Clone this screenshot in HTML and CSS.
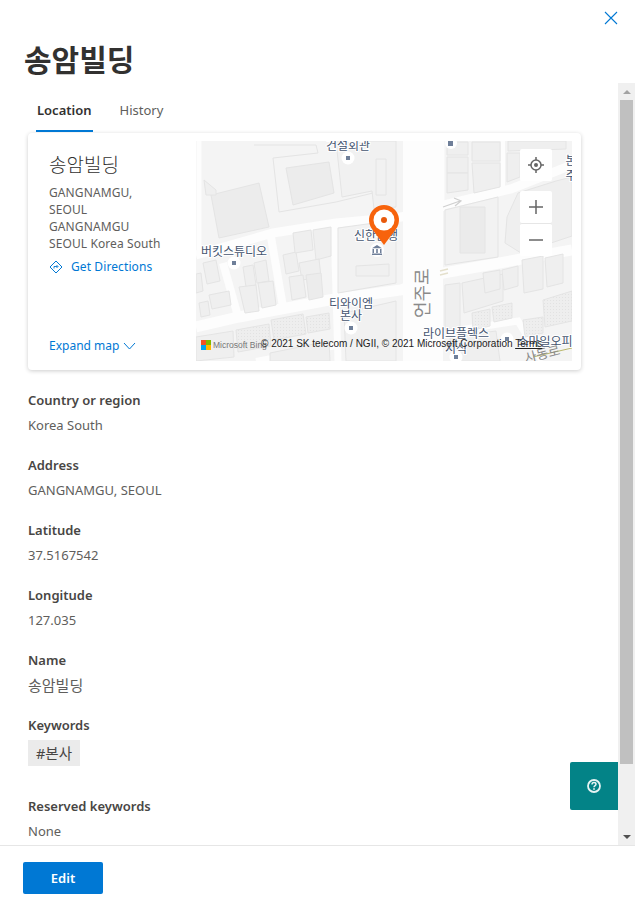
FILE: index.html
```html
<!DOCTYPE html>
<html lang="ko">
<head>
    <meta charset="UTF-8">
    <meta name="viewport" content="width=device-width, initial-scale=1.0">
    <title>송암빌딩</title>
    <link rel="stylesheet" href="styles.css">
</head>
<body>
    <div class="panel">
        <div class="panel-header">
            <div class="close-row">
                <button class="close-btn" aria-label="Close">
                    <svg width="14" height="14" viewBox="0 0 14 14"><path d="M1 1L13 13M13 1L1 13" stroke="#0078d4" stroke-width="1.1" fill="none"/></svg>
                </button>
            </div>
            <h1 class="panel-title">송암빌딩</h1>
        </div>

        <div class="panel-middle">
            <div class="content">
                <div class="tabs">
                    <div class="tab tab-active">Location</div>
                    <div class="tab">History</div>
                </div>

                <div class="map-card">
                    <div class="map-info">
                        <div>
                            <div class="place-name">송암빌딩</div>
                            <div class="place-address">GANGNAMGU,<br>SEOUL<br>GANGNAMGU<br>SEOUL Korea South</div>
                            <div class="directions">
                                <svg width="14" height="14" viewBox="0 0 14 14"><path d="M7 1L13 7L7 13L1 7Z" stroke="#0078d4" fill="none"/><path d="M5 8.5V6.5H8.5M7.5 5L9 6.5L7.5 8" stroke="#0078d4" stroke-width="0.9" fill="none"/></svg>
                                <span>Get Directions</span>
                            </div>
                        </div>
                        <div class="expand-map">
                            <span>Expand map</span>
                            <svg width="13" height="8" viewBox="0 0 13 8"><path d="M1 1L6.5 7L12 1" stroke="#0078d4" fill="none"/></svg>
                        </div>
                    </div>

                    <div class="map">
                        <svg class="map-art" width="376" height="220" viewBox="0 0 376 220">
                            <defs>
                                <pattern id="dots" width="3" height="3" patternUnits="userSpaceOnUse">
                                    <rect width="3" height="3" fill="#eeeeee"/>
                                    <rect width="1" height="1" fill="#e2e2e2"/>
                                </pattern>
                            </defs>
                            <rect width="376" height="220" fill="#f4f4f4"/>
                            <!-- roads -->
                            <g fill="none" stroke="#fdfdfd">
                                <path d="M0 114L77 92L140 82L205 76L247 64L315 48L376 24" stroke-width="9"/>
                                <path d="M0 186L43 176L133 159L205 149L247 132L376 109" stroke-width="11"/>
                                <path d="M227 0V220" stroke-width="40"/>
                                <path d="M27 122L43 179" stroke-width="8"/>
                                <path d="M75 96L87 166" stroke-width="8"/>
                                <path d="M138 82L142 220" stroke-width="7"/>
                                <path d="M3 0V112" stroke-width="5"/>
                                <path d="M60 220L140 205" stroke-width="6"/>
                                <path d="M250 191L322 180L346 220" stroke-width="7"/>
                                <path d="M307 0V52" stroke-width="4"/>
                                <path d="M246 0V70" stroke-width="5"/>
                            </g>
                            <!-- buildings -->
                            <g fill="#efefef" stroke="#e4e4e4">
                                <path d="M15 54L63 42L73 86L23 97Z" fill="#ececec"/>
                                <path d="M8 39L20 49V54L10 54Z"/>
                                <path d="M90 27L133 21L138 52L97 64Z" fill="#ececec"/>
                                <path d="M58 4H120L122 12L77 17L83 71L140 61L177 52" fill="none"/>
                                <path d="M140 0H200V66L178 68L176 50L146 56Z" fill="#f1f1f1"/>
                                <path d="M180 18H190V54H180Z" fill="none"/>
                                <path d="M87 114L100 111L103 130L90 133Z"/>
                                <path d="M97 92L115 89L117 109L99 112Z"/>
                                <path d="M117 89L135 86V115L120 119Z"/>
                                <path d="M103 122L123 118L125 136L106 139Z"/>
                                <path d="M93 136L107 134L110 156L96 159Z"/>
                                <path d="M110 134L125 132L127 156L113 159Z" fill="#ececec"/>
                                <path d="M47 126L57 124L60 144L50 146Z"/>
                                <path d="M58 122L70 119L73 140L61 142Z"/>
                                <path d="M43 146L60 144L63 170L49 172Z"/>
                                <path d="M62 142L77 140L80 164L66 167Z"/>
                                <path d="M7 122L20 119L24 140L11 143Z"/>
                                <path d="M0 133L5 132L7 150L0 152Z"/>
                                <path d="M3 162L12 160L14 174L5 176Z"/>
                                <path d="M13 154L33 150L35 164L16 168Z"/>
                                <path d="M142 87L200 79V142L142 152Z" fill="#f2f2f2"/>
                                <path d="M160 125L193 123V135H160Z" fill="#f0f0f0"/>
                                <path d="M148 172L200 160V220H150Z" fill="#f1f1f1"/>
                                <path d="M40 189L73 183L75 205L42 211Z" fill="url(#dots)"/>
                                <path d="M75 179L107 173L110 193L78 199Z" fill="url(#dots)"/>
                                <path d="M110 176L133 172L134 188L112 192Z" fill="url(#dots)"/>
                                <path d="M0 196L37 190L38 216L0 220Z"/>
                                <path d="M74 212L133 200L134 220H74Z"/>
                                <path d="M251 16H272V32H251Z"/>
                                <path d="M251 32H272V49L251 52Z"/>
                                <path d="M251 1H272V14H251Z"/>
                                <path d="M276 1H304V20H276Z"/>
                                <path d="M276 22H304V46L278 52Z"/>
                                <path d="M312 0H370V8L312 10Z"/>
                                <path d="M311 12H324V36L311 41Z"/>
                                <path d="M249 69L302 56V116L249 124Z" fill="#f2f2f2"/>
                                <path d="M264 66H289V112H264Z" fill="#ebebeb"/>
                                <path d="M309 102L311 76L322 52L360 40L376 36V95L325 112Z"/>
                                <path d="M330 60L350 54L352 88L332 94Z"/>
                                <path d="M249 144L264 142V189H249Z"/>
                                <path d="M266 142L307 133V160L268 172Z"/>
                                <path d="M287 132L304 129V148L289 152Z"/>
                                <path d="M306 129L322 125V145L308 149Z"/>
                                <path d="M326 119L347 115V148L328 152Z"/>
                                <path d="M349 117L367 113V142L351 146Z"/>
                                <path d="M347 159L376 150V180L349 186Z" fill="url(#dots)"/>
                                <path d="M327 179L347 176V192L329 196Z" fill="url(#dots)"/>
                                <path d="M276 172L294 168V185L277 189Z" fill="url(#dots)"/>
                                <path d="M296 166L316 162V177L298 181Z" fill="url(#dots)"/>
                                <path d="M254 196L300 190L304 220H256Z"/>
                            </g>
                            <path d="M247 66L264 60M258 57L265 60L259 65" fill="none" stroke="#cfcfcf" stroke-width="1.2"/>
                            <path d="M244 130L252 128M244 134L252 132" stroke="#e4e0cc" stroke-width="1.5"/>
                            <path d="M337 216L376 207" stroke="#b9b66a" stroke-width="1"/>
                            <!-- place dots -->
                            <g fill="#fff">
                                <circle cx="152" cy="17" r="6.5"/>
                                <circle cx="38" cy="122" r="6.5"/>
                                <circle cx="155" cy="187" r="6.5"/>
                                <circle cx="260" cy="216" r="6.5"/>
                                <circle cx="311" cy="198" r="6.5"/>
                                <circle cx="181" cy="109" r="7"/>
                                <circle cx="255" cy="2" r="6"/>
                            </g>
                            <g fill="#6f7f99">
                                <rect x="150" y="15" width="4" height="4"/>
                                <rect x="36" y="120" width="4" height="4"/>
                                <rect x="153" y="185" width="4" height="4"/>
                                <rect x="258" y="214" width="4" height="4"/>
                                <rect x="309" y="196" width="4" height="4"/>
                                <rect x="252" y="0" width="5" height="5"/>
                                <path d="M176 114H186V112.5H176ZM176.5 108H178V112H176.500ZM180.200 108H181.800V112H180.200ZM184 108H185.500V112H184ZM176 107.200L181 104L186 107.200Z"/>
                            </g>
                            <!-- labels -->
                            <g class="map-label">
                                <text x="152" y="9" text-anchor="middle">건설회관</text>
                                <text x="38" y="115" text-anchor="middle">버킷스튜디오</text>
                                <text x="180" y="99" text-anchor="middle">신한은행</text>
                                <text x="155" y="167" text-anchor="middle">티와이엠</text>
                                <text x="155" y="179" text-anchor="middle">본사</text>
                                <text x="260" y="197" text-anchor="middle">라이브플렉스</text>
                                <text x="260" y="212" text-anchor="middle">지식</text>
                                <text x="349" y="205" text-anchor="middle">스마일오피</text>
                                <text x="375" y="24" text-anchor="middle">본</text>
                                <text x="375" y="39" text-anchor="middle">주</text>
                            </g>
                            <text class="road-label" transform="translate(233,177) rotate(-90)">언주로</text>
                            <text class="road-label road-label-small" transform="translate(330,222) rotate(-14)">사동로</text>
                            <!-- pin -->
                            <path d="M188 104L176 88A15 15 0 1 1 200 88Z" fill="#f7630c"/>
                            <circle cx="188" cy="79" r="10.5" fill="#fff"/>
                            <circle cx="188" cy="79" r="3" fill="#e8590c"/>
                            <!-- bing logo -->
                            <rect x="5" y="199" width="5" height="5" fill="#f25022"/>
                            <rect x="10" y="199" width="5" height="5" fill="#7fba00"/>
                            <rect x="5" y="204" width="5" height="5" fill="#00a4ef"/>
                            <rect x="10" y="204" width="5" height="5" fill="#ffb900"/>
                        </svg>

                        <span class="bing-name">Microsoft Bing</span>
                        <div class="attribution">© 2021 SK telecom / NGII, © 2021 Microsoft Corporation <u>Terms</u></div>

                        <div class="map-controls">
                            <div class="map-btn">
                                <svg width="18" height="18" viewBox="0 0 18 18"><circle cx="9" cy="9" r="5" stroke="#666" stroke-width="1.5" fill="none"/><circle cx="9" cy="9" r="2" fill="#666"/><path d="M9 1V4M9 14V17M1 9H4M14 9H17" stroke="#666" stroke-width="1.5"/></svg>
                            </div>
                            <div class="zoom-group">
                                <div class="map-btn">
                                    <svg width="16" height="16" viewBox="0 0 16 16"><path d="M8 1V15M1 8H15" stroke="#666" stroke-width="1.5"/></svg>
                                </div>
                                <div class="map-btn">
                                    <svg width="16" height="16" viewBox="0 0 16 16"><path d="M1 8H15" stroke="#666" stroke-width="1.5"/></svg>
                                </div>
                            </div>
                        </div>
                    </div>
                </div>

                <div class="field">
                    <div class="field-label">Country or region</div>
                    <div class="field-value">Korea South</div>
                </div>
                <div class="field">
                    <div class="field-label">Address</div>
                    <div class="field-value">GANGNAMGU, SEOUL</div>
                </div>
                <div class="field">
                    <div class="field-label">Latitude</div>
                    <div class="field-value">37.5167542</div>
                </div>
                <div class="field">
                    <div class="field-label">Longitude</div>
                    <div class="field-value">127.035</div>
                </div>
                <div class="field">
                    <div class="field-label">Name</div>
                    <div class="field-value field-value-ko">송암빌딩</div>
                </div>
                <div class="field field-keywords">
                    <div class="field-label">Keywords</div>
                    <span class="tag">#본사</span>
                </div>
                <div class="field">
                    <div class="field-label">Reserved keywords</div>
                    <div class="field-value">None</div>
                </div>
            </div>

            <div class="scrollbar">
                <div class="scroll-arrow"><div class="arrow-up"></div></div>
                <div class="scroll-track"><div class="scroll-thumb"></div></div>
                <div class="scroll-arrow"><div class="arrow-down"></div></div>
            </div>

            <button class="help-btn" aria-label="Help">
                <svg width="16" height="16" viewBox="0 0 16 16"><circle cx="8" cy="8" r="6" stroke="#e6f3f3" stroke-width="1.8" fill="none"/><path d="M6 6.4C6 5.2 6.9 4.6 8 4.6C9.1 4.6 10 5.2 10 6.3C10 7.6 8 7.600 8 9.2" stroke="#e6f3f3" stroke-width="1.5" fill="none"/><rect x="7.2" y="10.2" width="1.6" height="1.6" fill="#e6f3f3"/></svg>
            </button>
        </div>

        <div class="panel-footer">
            <button class="edit-btn">Edit</button>
        </div>
    </div>
</body>
</html>
```

FILE: styles.css
```css
body {
    font-family: "Noto Sans", "Noto Sans CJK KR", sans-serif;
    background-color: white;
    color: #323130;
    margin: 0;
}
.panel {
    display: flex;
    flex-direction: column;
    height: 905px;
    overflow: hidden;
}
.panel-header {
    height: 83px;
    box-sizing: border-box;
    padding-top: 11px;
    flex-shrink: 0;
}
.close-row {
    display: flex;
    justify-content: flex-end;
    padding-right: 17px;
}
.close-btn {
    background: none;
    border: none;
    padding: 0;
    width: 14px;
    height: 14px;
    display: block;
}
.panel-title {
    font-family: "Noto Sans CJK KR", sans-serif;
    font-size: 30px;
    font-weight: 700;
    line-height: 40px;
    margin: 13px 0 0 24px;
}
.panel-middle {
    flex: 1;
    min-height: 0;
    display: flex;
    position: relative;
}
.content {
    flex: 1;
    min-width: 0;
    overflow: hidden;
    padding-left: 28px;
}
.tabs {
    display: flex;
    gap: 27px;
    height: 49px;
    padding-left: 8px;
    box-sizing: border-box;
}
.tab {
    font-size: 13px;
    line-height: 20px;
    padding-top: 17px;
    color: #605e5c;
}
.tab-active {
    font-weight: 600;
    color: #323130;
    border-bottom: 2px solid #0078d4;
    padding-left: 1px;
    padding-right: 1px;
}
.map-card {
    display: flex;
    width: 553px;
    height: 237px;
    margin-top: 1px;
    box-sizing: border-box;
    padding: 8px 9px 9px 0;
    background-color: white;
    border-radius: 4px;
    box-shadow: 0 1px 4px rgba(0, 0, 0, 0.2);
}
.map-info {
    width: 168px;
    box-sizing: border-box;
    padding: 10px 10px 7px 21px;
    display: flex;
    flex-direction: column;
    justify-content: space-between;
    flex-shrink: 0;
}
.place-name {
    font-family: "Noto Sans CJK KR", sans-serif;
    font-size: 19px;
    font-weight: 300;
    line-height: 26px;
    color: #323130;
    margin-bottom: 7px;
}
.place-address {
    font-size: 12px;
    letter-spacing: 0.1px;
    line-height: 17px;
    color: #605e5c;
}
.directions {
    display: flex;
    align-items: center;
    gap: 8px;
    margin-top: 6px;
    font-size: 12px;
    letter-spacing: 0.1px;
    line-height: 17px;
    color: #0078d4;
}
.expand-map {
    display: flex;
    align-items: center;
    gap: 4px;
    font-size: 12px;
    line-height: 17px;
    color: #0078d4;
}
.map {
    position: relative;
    width: 376px;
    height: 220px;
    overflow: hidden;
}
.map-art {
    display: block;
}
.map-label text {
    font-family: "Noto Sans CJK KR", sans-serif;
    font-size: 12px;
    fill: #44546f;
    stroke: white;
    stroke-width: 2px;
    paint-order: stroke;
}
.road-label {
    font-family: "Noto Sans CJK KR", sans-serif;
    font-size: 18px;
    fill: #8a8a8a;
}
.road-label-small {
    font-size: 13px;
}
.bing-name {
    position: absolute;
    left: 17px;
    top: 199px;
    font-family: "Liberation Sans", sans-serif;
    font-size: 8.5px;
    line-height: 11px;
    color: #777;
}
.attribution {
    position: absolute;
    left: 65px;
    top: 196px;
    font-family: "Liberation Sans", sans-serif;
    font-size: 10px;
    line-height: 13px;
    color: #222;
    white-space: nowrap;
}
.map-controls {
    position: absolute;
    top: 8px;
    right: 20px;
    display: flex;
    flex-direction: column;
    gap: 10px;
}
.map-btn {
    width: 32px;
    height: 32px;
    background-color: white;
    border-radius: 2px;
    display: flex;
    align-items: center;
    justify-content: center;
}
.zoom-group .map-btn + .map-btn {
    border-top: 1px solid #e6e6e6;
}
.field {
    margin-bottom: 15px;
}
.map-card + .field {
    margin-top: 18px;
}
.field-label {
    font-size: 13px;
    font-weight: 600;
    line-height: 25px;
    color: #484644;
}
.field-value {
    font-size: 13px;
    line-height: 25px;
    color: #605e5c;
}
.field-value-ko {
    font-size: 15px;
}
.field-keywords {
    margin-bottom: 28px;
}
.tag {
    display: inline-block;
    margin-top: 2px;
    padding: 0 8px;
    height: 26px;
    line-height: 26px;
    font-size: 14.5px;
    color: #484644;
    background-color: #ebebeb;
}
.scrollbar {
    width: 17px;
    flex-shrink: 0;
    background-color: #f0f0f0;
    display: flex;
    flex-direction: column;
}
.scroll-arrow {
    height: 17px;
    display: flex;
    align-items: center;
    justify-content: center;
}
.arrow-up {
    width: 0;
    height: 0;
    border-left: 4px solid transparent;
    border-right: 4px solid transparent;
    border-bottom: 4px solid #a3a3a3;
}
.arrow-down {
    width: 0;
    height: 0;
    border-left: 4px solid transparent;
    border-right: 4px solid transparent;
    border-top: 4px solid #505050;
}
.scroll-track {
    flex: 1;
    padding: 0 2px;
}
.scroll-thumb {
    height: 664px;
    background-color: #c0c0c0;
}
.help-btn {
    position: absolute;
    right: 17px;
    bottom: 35px;
    width: 48px;
    height: 48px;
    border: none;
    border-radius: 2px 0 0 2px;
    background-color: #038387;
    display: flex;
    align-items: center;
    justify-content: center;
    padding: 0;
}
.panel-footer {
    height: 60px;
    flex-shrink: 0;
    box-sizing: border-box;
    border-top: 1px solid #e6e6e6;
    padding: 16px 23px;
}
.edit-btn {
    display: block;
    width: 80px;
    height: 32px;
    border: none;
    border-radius: 2px;
    background-color: #0078d4;
    color: white;
    font-family: "Noto Sans", sans-serif;
    font-size: 13px;
    font-weight: 600;
}
```
